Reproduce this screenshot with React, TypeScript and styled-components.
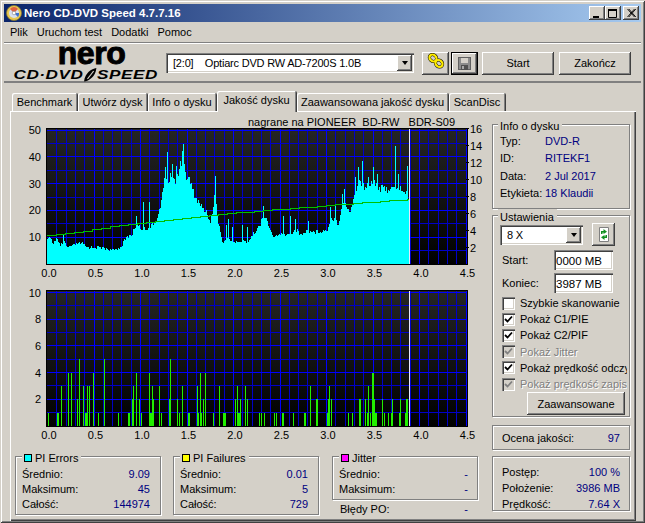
import React from 'react';
import styled, { createGlobalStyle, css } from 'styled-components';

const FACE = '#d4d0c8';
const raised = css`
  box-shadow: inset -1px -1px 0 #404040, inset 1px 1px 0 #fff, inset -2px -2px 0 #808080, inset 2px 2px 0 ${FACE};
`;
const sunken = css`
  box-shadow: inset 1px 1px 0 #808080, inset 2px 2px 0 #404040, inset -1px -1px 0 #fff, inset -2px -2px 0 ${FACE};
`;
const etched = css`
  border: 1px solid #808080;
  box-shadow: inset 1px 1px 0 #fff, 1px 1px 0 #fff;
`;

const Global = createGlobalStyle`
  html, body { margin: 0; padding: 0; background: ${FACE}; }
  body { font-family: "Liberation Sans", Arial, sans-serif; font-size: 11px; color: #000; }
  #root { width: 645px; height: 523px; overflow: hidden; }
  * { box-sizing: border-box; }
`;

const Win = styled.div`
  width: 645px;
  height: 523px;
  padding: 4px 4px 2px;
  background: ${FACE};
  display: flex;
  flex-direction: column;
  box-shadow: inset 1px 1px 0 ${FACE}, inset -1px -1px 0 #404040, inset 2px 2px 0 #fff, inset -2px -2px 0 #808080;
`;
const TitleBar = styled.div`
  height: 18px;
  flex: none;
  display: flex;
  align-items: center;
  padding: 0 2px;
  background: linear-gradient(90deg, #0a246a, #a6caf0);
`;
const TitleText = styled.span`
  color: #fff;
  font-weight: 700;
  font-size: 11.5px;
  margin-left: 2px;
  flex: 1;
`;
const CaptionBtn = styled.div<{ $gap?: number }>`
  width: 16px;
  height: 14px;
  background: ${FACE};
  margin-left: ${p => p.$gap ?? 0}px;
  display: flex;
  align-items: center;
  justify-content: center;
  ${raised}
`;
const MenuBar = styled.div`
  height: 20px;
  flex: none;
  display: flex;
  align-items: center;
  padding-left: 6px;
  gap: 9px;
`;
const MenuItem = styled.span``;
const Toolbar = styled.div`
  height: 41px;
  flex: none;
  display: flex;
  align-items: center;
  padding: 1px 0 0 10px;
  box-shadow: inset 0 1px 0 #808080, inset 0 2px 0 #fff, inset 0 -2px 0 #808080, inset 0 -1px 0 #fff;
`;
const Logo = styled.div`
  width: 152px;
  height: 37px;
  display: flex;
  flex-direction: column;
  align-items: center;
`;
const Nero = styled.div`
  font-size: 32px;
  line-height: 25px;
  height: 25px;
  margin-top: -4px;
  font-weight: 700;
  letter-spacing: -0.4px;
  -webkit-text-stroke: 1px #000;
  margin-left: 3px;
`;
const LogoSub = styled.div`
  margin: 2px 0 0 -8px;
  display: flex;
  align-items: center;
  height: 14px;
  font-size: 12.5px;
  font-weight: 700;
  font-style: italic;
  white-space: nowrap;
  letter-spacing: 0.4px;
  transform: scaleX(1.37);
`;
const Combo = styled.div<{ $w: number; $h?: number }>`
  width: ${p => p.$w}px;
  height: ${p => p.$h ?? 20}px;
  flex: none;
  background: #fff;
  display: flex;
  align-items: center;
  padding: 2px 2px 2px 7px;
  ${sunken}
`;
const ComboText = styled.span`
  flex: 1;
  white-space: pre;
  letter-spacing: -0.2px;
`;
const ComboArrow = styled.div`
  width: 15px;
  height: 16px;
  background: ${FACE};
  display: flex;
  align-items: center;
  justify-content: center;
  ${raised}
  &::after {
    content: '';
    border-style: solid;
    border-width: 4px 3.5px 0;
    border-color: #000 transparent transparent;
  }
`;
const Btn = styled.div<{ $w: number; $h?: number; $ml?: number; $def?: boolean }>`
  width: ${p => p.$w}px;
  height: ${p => p.$h ?? 23}px;
  margin-left: ${p => p.$ml ?? 0}px;
  flex: none;
  background: ${FACE};
  display: flex;
  align-items: center;
  justify-content: center;
  ${raised}
  ${p => p.$def && css`
    border: 1px solid #000;
  `}
`;
const TabStrip = styled.div`
  height: 28px;
  flex: none;
  padding: 8px 0 0 8px;
  display: flex;
  align-items: flex-end;
`;
const Tab = styled.div<{ $w: number; $on?: boolean }>`
  width: ${p => p.$w}px;
  height: ${p => (p.$on ? 21 : 18)}px;
  margin-bottom: ${p => (p.$on ? -1 : 0)}px;
  background: ${FACE};
  border-radius: 2px 2px 0 0;
  display: flex;
  align-items: center;
  justify-content: center;
  position: relative;
  z-index: ${p => (p.$on ? 2 : 0)};
  padding-bottom: ${p => (p.$on ? 3 : 0)}px;
  box-shadow: inset 1px 1px 0 #fff, inset -1px 0 0 #808080;
  border-right: 1px solid #404040;
`;
const Panel = styled.div`
  margin: 0 5px 0 6px;
  flex: 1;
  min-height: 0;
  padding: 1px 3px 0 2px;
  display: flex;
  box-shadow: inset 1px 1px 0 #fff, inset -1px -1px 0 #404040, inset -2px -2px 0 #808080;
`;
const LeftCol = styled.div`
  width: 478px;
  flex: none;
  display: flex;
  flex-direction: column;
`;
const RightCol = styled.div`
  width: 138px;
  margin-left: 2px;
  flex: none;
  padding-top: 6px;
  display: flex;
  flex-direction: column;
`;
const ChartSvg = styled.svg`
  display: block;
  flex: none;
  font-family: "Liberation Sans", Arial, sans-serif;
  font-size: 11px;
  text {
    fill: #000;
    white-space: pre;
  }
`;
const Group = styled.fieldset<{ $w?: number; $pad?: string }>`
  margin: 0;
  min-width: 0;
  width: ${p => (p.$w ? `${p.$w}px` : 'auto')};
  padding: ${p => p.$pad ?? '0'};
  ${etched}
`;
const Legend = styled.legend<{ $ml?: number }>`
  margin-left: ${p => p.$ml ?? 0}px;
  padding: 3px 3px 0 2px;
  height: 13px;
  line-height: 13px;
  background: ${FACE};
  display: flex;
  align-items: center;
  white-space: nowrap;
`;
const Swatch = styled.i<{ $c: string }>`
  width: 8px;
  height: 8px;
  background: ${p => p.$c};
  border: 1px solid #000;
  margin-right: 3px;
`;
const StatsRow = styled.div`
  margin: 6px 0 0 3px;
  display: flex;
  gap: 12px;
`;
const Stat = styled.div<{ $h?: number }>`
  flex: none;
  display: flex;
  justify-content: space-between;
  align-items: center;
  height: ${p => p.$h ?? 15}px;
`;
const Value = styled.span`
  color: #000080;
`;
const InfoRow = styled.div`
  display: grid;
  grid-template-columns: 45px 1fr;
  align-items: center;
  height: 17.5px;
`;
const JitterCol = styled.div`
  width: 146px;
  margin-left: 1px;
  display: flex;
  flex-direction: column;
`;
const ErrRow = styled(Stat)`
  padding: 2px 10px 0 8px;
`;
const SetRow = styled.div<{ $mt?: number; $ml?: number }>`
  display: flex;
  align-items: center;
  margin: ${p => p.$mt ?? 0}px 0 0 ${p => p.$ml ?? 0}px;
`;
const Input = styled.div`
  margin-left: auto;
  margin-right: 16px;
  width: 59px;
  height: 20px;
  padding: 1px 0 0 2px;
  background: #fff;
  font-size: 11.5px;
  display: flex;
  align-items: center;
  ${sunken}
`;
const CheckList = styled.div`
  margin: 2px 0 0 2px;
`;
const CheckRow = styled.div<{ $dis?: boolean }>`
  height: 16.2px;
  width: 125px;
  display: flex;
  align-items: center;
  white-space: nowrap;
  overflow: hidden;
  color: ${p => (p.$dis ? '#808080' : '#000')};
  text-shadow: ${p => (p.$dis ? '1px 1px 0 #fff' : 'none')};
`;
const Box = styled.span<{ $dis?: boolean }>`
  width: 13px;
  height: 13px;
  flex: none;
  margin-right: 5px;
  background: ${p => (p.$dis ? FACE : '#fff')};
  display: flex;
  align-items: center;
  justify-content: center;
  ${sunken}
`;
const PlainGroup = styled.div<{ $h: number; $mt: number; $top?: boolean }>`
  height: ${p => p.$h}px;
  margin-top: ${p => p.$mt}px;
  padding: ${p => (p.$top ? '7px' : '0')} 9px 0;
  display: flex;
  flex-direction: column;
  justify-content: ${p => (p.$top ? 'flex-start' : 'center')};
  ${etched}
`;

const X = (v: number) => 47.5 + 93 * v;

function Chart({ top, height, plotTop, bottom, left, right, unit, minor, major, max, labelY, caption, children }: {
  top: number; height: number; plotTop: number; bottom: number; left: number[]; right?: number[];
  unit: number; minor: number; major: number; max: number; labelY: number; caption?: string; children: React.ReactNode;
}) {
  const Y = (v: number) => bottom - unit * v;
  const vs: number[] = [];
  for (let i = 1; i <= 45; i++) vs.push(i);
  const hs: number[] = [];
  for (let v = minor; v <= max + 0.001; v += minor) hs.push(v);
  const gid = `bg${top}`;
  return (
    <ChartSvg width={478} height={height} viewBox={`12 ${top} 478 ${height}`}>
      <defs>
        <linearGradient id={gid} x1="0" y1="0" x2="0" y2="1">
          <stop offset="0" stopColor="#252525" />
          <stop offset="1" stopColor="#000" />
        </linearGradient>
      </defs>
      {caption && <text x={248} y={127}>{caption}</text>}
      <rect x={46} y={plotTop} width={422} height={bottom - plotTop + 1} fill="#000" />
      <rect x={47} y={plotTop + 1} width={419} height={bottom - plotTop} fill={`url(#${gid})`} />
      <g shapeRendering="crispEdges">
        {vs.map(i => (
          <line key={i} x1={X(i / 10)} x2={X(i / 10)} y1={plotTop + 1} y2={bottom}
            stroke={i % 5 === 0 ? '#0000ff' : '#0000c8'} strokeWidth={1} />
        ))}
        {hs.map(v => {
          const isMajor = Math.abs(v / major - Math.round(v / major)) < 0.001;
          return <line key={v} x1={47} x2={466} y1={Y(v)} y2={Y(v)} stroke={isMajor ? '#0000ff' : '#0000c8'} strokeWidth={1} />;
        })}
      </g>
      {children}
      <line x1={409.5} x2={409.5} y1={plotTop + 1} y2={bottom} stroke="#e8e8ff" strokeWidth={1} shapeRendering="crispEdges" />
      {left.map(v => <text key={v} x={41} y={Y(v) + 4} textAnchor="end">{v}</text>)}
      {right && right.map(v => (
        <React.Fragment key={v}>
          <line x1={466} x2={469} y1={265 - 8.44 * v} y2={265 - 8.44 * v} stroke="#000" shapeRendering="crispEdges" />
          <text x={470} y={265 - 8.44 * v + 4.5}>{v}</text>
        </React.Fragment>
      ))}
      {[0, 0.5, 1, 1.5, 2, 2.5, 3, 3.5, 4, 4.5].map(v => (
        <text key={v} x={X(v) + 1.5} y={labelY} textAnchor="middle">{v.toFixed(1)}</text>
      ))}
    </ChartSvg>
  );
}

const ENV: [number, number][] = [
  [47,238],[50,238],[53,243],[56,237],[60,246],[63,240],[67,247],[77,243],[82,243],[87,247],[100,247],[113,250],[120,247],
  [125,238],[132,233],[137,220],[140,228],[145,228],[152,224],[158,214],[162,192],[165,170],[168,180],[172,168],[175,180],
  [178,168],[180,165],[183,158],[185,172],[188,174],[192,186],[195,195],[200,203],[207,211],[210,223],[213,203],[215,180],
  [217,216],[220,230],[222,242],[227,237],[230,239],[233,242],[240,241],[248,241],[252,234],[257,227],[260,224],[263,212],
  [267,221],[270,229],[273,237],[277,234],[283,234],[290,234],[295,227],[300,234],[308,229],[312,231],[327,229],[330,217],
  [335,217],[338,223],[342,199],[344,197],[347,209],[350,209],[355,189],[358,177],[362,181],[365,187],[368,181],[373,177],
  [380,186],[387,186],[393,186],[398,184],[403,188],[409,195],
];
const SPIKES: [number, number][] = [
  [63,235],[143,203],[149,203],[167,153],[183,145],[182,152],[180,162],[176,167],[172,165],[165,168],[215,177],[228,220],[136,217],
  [263,207],[283,217],[290,217],[295,220],[308,222],[330,208],[335,207],[342,195],[344,190],[355,178],[358,168],[362,162],
  [368,178],[373,168],[377,175],[395,147],[398,175],[407,167],[247,228],[232,228],[242,226],[226,226],
];
const envAt = (x: number) => {
  for (let i = 1; i < ENV.length; i++) {
    if (x <= ENV[i][0]) {
      const [a, b] = ENV[i - 1];
      const [c, d] = ENV[i];
      return b + ((d - b) * (x - a)) / (c - a);
    }
  }
  return ENV[ENV.length - 1][1];
};
const rnd = (x: number) => {
  const s = Math.sin(x * 12.9898) * 43758.5453;
  return s - Math.floor(s);
};
function cyanPath() {
  const tops: Record<number, number> = {};
  for (let x = 47; x < 410; x++) {
    const t = envAt(x);
    tops[x] = Math.min(264, Math.round(t + rnd(x) * (1.5 + (265 - t) * 0.08)));
  }
  SPIKES.forEach(([x, y]) => { tops[x] = y; });
  let d = 'M47 265';
  for (let x = 47; x < 410; x++) d += `V${tops[x]}H${x + 1}`;
  return d + 'V265Z';
}
const GREEN: [number, number][] = [[47,236],[60,235],[133,224],[240,213],[327,206],[409,200]];
function greenPath() {
  const at = (x: number) => {
    for (let i = 1; i < GREEN.length; i++) {
      if (x <= GREEN[i][0]) {
        const [a, b] = GREEN[i - 1];
        const [c, d] = GREEN[i];
        return b + ((d - b) * (x - a)) / (c - a);
      }
    }
    return 200;
  };
  let d = `M47 ${at(47)}`;
  for (let x = 47; x < 409; x += 9) {
    const nx = Math.min(409, x + 9);
    d += `H${nx}V${Math.round(at(nx))}`;
  }
  return d;
}

const B1: [number, number, number?][] = [
  [145,1],[170,1],[175,1],[184,3],[205,4],[214,4],[232,2],[238,5],[250,3],[256,1,2],[262,3],[268,3],[280,4],[295,1],[313,5],[355,1],
  [385,1,2],[397,2,2],[400,3],[409,4],[418,2],[424,1],[448,4],[451,1,2],[457,3],[460,2],[478,3],[484,1],[508,2,2],[511,5],[532,2],
  [538,1],[547,3],[565,1,2],[592,3],[595,1],[601,4],[604,1],[610,2],[616,4],[640,1],[658,3],[670,1,3],[706,2],[712,3],[715,1,2],[721,2],[736,3],[742,2],
];
const B2: [number, number, number?][] = [
  [0,2],[16,3],[22,2],[58,1],[64,1],[73,1],[103,1],[109,1],[127,1,2],[160,1],[193,1,2],[211,3],[229,2,2],[262,1,2],[265,2],[268,3],[274,2],
  [325,1],[337,1],[358,2,2],[376,2],[382,1],[385,3],[391,1],[397,4,2],[403,2],[403,1,3],[427,2],[433,1],[445,1],[454,1,2],[457,2],[478,1,2],[481,2],[496,1,2],[499,2,2],
];

const DiscIcon = () => (
  <svg width="16" height="16" viewBox="0 0 16 16">
    <circle cx="8" cy="8" r="7.5" fill="#e8c850" stroke="#8a7a30" strokeWidth="0.8" />
    <circle cx="8" cy="8" r="5" fill="#d8e0f0" />
    <path d="M8 8 L4 4 A5 5 0 0 1 12 4Z" fill="#e06040" />
    <path d="M8 8 L12 12 A5 5 0 0 0 13 8Z" fill="#4070d0" />
    <circle cx="8" cy="8" r="1.8" fill="#fff" stroke="#707070" strokeWidth="0.5" />
  </svg>
);
const MinIcon = () => <svg width="10" height="9" viewBox="0 0 10 9"><rect x="1" y="7" width="6" height="2" fill="#000" /></svg>;
const MaxIcon = () => <svg width="10" height="9" viewBox="0 0 10 9"><path d="M0.5 1.5H8.5V8.5H0.5Z M0.5 0.5H8.5" fill="none" stroke="#000" /><rect width="9" height="2" fill="#000" /></svg>;
const CloseIcon = () => <svg width="9" height="8" viewBox="0 0 9 8"><path d="M0.5 0L7.5 8M1.8 0L8.8 8M7.5 0L0.5 8M8.8 0L1.8 8" stroke="#000" strokeWidth="0.9" fill="none" /></svg>;
const LinkSvg = styled.svg`
  margin-bottom: 4px;
`;
const LinkIcon = () => (
  <LinkSvg width="18" height="16" viewBox="0 0 18 16">
    <g fill="none">
      <ellipse cx="6" cy="5" rx="3.8" ry="3.2" transform="rotate(40 6 5)" stroke="#000" strokeWidth="3.2" />
      <ellipse cx="12" cy="10.5" rx="3.8" ry="3.2" transform="rotate(40 12 10.5)" stroke="#000" strokeWidth="3.2" />
      <ellipse cx="6" cy="5" rx="3.8" ry="3.2" transform="rotate(40 6 5)" stroke="#ffec00" strokeWidth="2.2" />
      <ellipse cx="12" cy="10.5" rx="3.8" ry="3.2" transform="rotate(40 12 10.5)" stroke="#ffec00" strokeWidth="2.2" />
    </g>
  </LinkSvg>
);
const SaveIcon = () => (
  <svg width="13" height="13" viewBox="0 0 13 13" shapeRendering="crispEdges">
    <rect width="13" height="13" fill="#606060" />
    <rect x="1" y="1" width="11" height="11" fill="#8c8c8c" />
    <rect x="3" y="1" width="7" height="5" fill="#d4d0c8" />
    <rect x="3" y="8" width="7" height="5" fill="#505050" />
    <rect x="4" y="9" width="2" height="3" fill="#a8a8a8" />
  </svg>
);
const RefreshIcon = () => (
  <svg width="10" height="15" viewBox="0 0 10 15">
    <path d="M0.5 0.5H9.5V14.5H0.5Z" fill="#fff" stroke="#808080" />
    <path d="M2 7V4H4.5V2L8 4.7L4.5 7V5.6H3.5V7Z" fill="#109020" />
    <path d="M8 8V11H5.5V13L2 10.3L5.5 8V9.4H6.5V8Z" fill="#109020" />
  </svg>
);
const Tick = ({ dis }: { dis?: boolean }) => (
  <svg width="9" height="9" viewBox="0 0 9 9"><path d="M1 4L3.5 6.5L8 1.5" fill="none" stroke={dis ? '#808080' : '#000'} strokeWidth="1.8" /></svg>
);
const LogoSlash = () => (
  <svg width="10" height="14" viewBox="0 0 10 14">
    <path d="M9.5 0C6 0.5 1 5 0.5 13.5C4 13 9 8.5 9.5 0Z" fill="#000" />
    <path d="M7.5 3L3 11" stroke={FACE} strokeWidth="0.8" />
  </svg>
);

const stats = [
  { name: 'PI Errors', c: '#00ffff', rows: [['Średnio:', '9.09'], ['Maksimum:', '45'], ['Całość:', '144974']] },
  { name: 'PI Failures', c: '#ffff00', rows: [['Średnio:', '0.01'], ['Maksimum:', '5'], ['Całość:', '729']] },
];
const checks: [string, boolean, boolean][] = [
  ['Szybkie skanowanie', false, false],
  ['Pokaż C1/PIE', true, false],
  ['Pokaż C2/PIF', true, false],
  ['Pokaż Jitter', true, true],
  ['Pokaż prędkość odczytu', true, false],
  ['Pokaż prędkość zapisu', true, true],
];
const tabs: [string, number, boolean?][] = [
  ['Benchmark', 66], ['Utwórz dysk', 70], ['Info o dysku', 69], ['Jakość dysku', 80, true], ['Zaawansowana jakość dysku', 152], ['ScanDisc', 57],
];

export default function App() {
  return (
    <Win>
      <Global />
      <TitleBar>
        <DiscIcon />
        <TitleText>Nero CD-DVD Speed 4.7.7.16</TitleText>
        <CaptionBtn><MinIcon /></CaptionBtn>
        <CaptionBtn><MaxIcon /></CaptionBtn>
        <CaptionBtn $gap={2}><CloseIcon /></CaptionBtn>
      </TitleBar>
      <MenuBar>
        <MenuItem>Plik</MenuItem>
        <MenuItem>Uruchom test</MenuItem>
        <MenuItem>Dodatki</MenuItem>
        <MenuItem>Pomoc</MenuItem>
      </MenuBar>
      <Toolbar>
        <Logo>
          <Nero>nero</Nero>
          <LogoSub>CD·DVD<LogoSlash />SPEED</LogoSub>
        </Logo>
        <Combo $w={248}>
          <ComboText>{'[2:0]    Optiarc DVD RW AD-7200S 1.0B'}</ComboText>
          <ComboArrow />
        </Combo>
        <Btn $w={27} $ml={8}><LinkIcon /></Btn>
        <Btn $w={27} $ml={2} $def><SaveIcon /></Btn>
        <Btn $w={72} $ml={4}>Start</Btn>
        <Btn $w={72} $ml={5}>Zakończ</Btn>
      </Toolbar>
      <TabStrip>
        {tabs.map(([t, w, on]) => <Tab key={t} $w={w} $on={on}>{t}</Tab>)}
      </TabStrip>
      <Panel>
        <LeftCol>
          <Chart top={113} height={170} plotTop={129} bottom={265} left={[10, 20, 30, 40, 50]} right={[2, 4, 6, 8, 10, 12, 14, 16]}
            unit={2.68} minor={5} major={10} max={50} labelY={278} caption={'nagrane na PIONEER  BD-RW   BDR-S09'}>
            <path d={cyanPath()} fill="#00ffff" shapeRendering="crispEdges" />
            <path d={greenPath()} fill="none" stroke="#00c000" strokeWidth="1" shapeRendering="crispEdges" />
          </Chart>
          <Chart top={283} height={162} plotTop={291} bottom={427} left={[2, 4, 6, 8, 10]}
            unit={13.35} minor={1} major={2} max={10} labelY={440}>
            <g fill="#22ee00" shapeRendering="crispEdges">
              {B1.map(([z, v, w], i) => <rect key={i} x={Math.round(z / 3)} y={427 - v * 13.35} width={w ?? 1} height={v * 13.35} />)}
              {B2.map(([z, v, w], i) => <rect key={i} x={240 + Math.round(z / 3)} y={427 - v * 13.35} width={w ?? 1} height={v * 13.35} />)}
            </g>
          </Chart>
          <StatsRow>
            {stats.map(s => (
              <Group key={s.name} $w={146} $pad="3px 10px 2px 6px">
                <Legend><Swatch $c={s.c} />{s.name}</Legend>
                {s.rows.map(([a, b]) => <Stat key={a}><span>{a}</span><Value>{b}</Value></Stat>)}
              </Group>
            ))}
            <JitterCol>
              <Group $w={146} $pad="3px 9px 3px 6px">
                <Legend><Swatch $c="#ff00ff" />Jitter</Legend>
                <Stat><span>Średnio:</span><Value>-</Value></Stat>
                <Stat><span>Maksimum:</span><Value>-</Value></Stat>
              </Group>
              <ErrRow><span>Błędy PO:</span><Value>-</Value></ErrRow>
            </JitterCol>
          </StatsRow>
        </LeftCol>
        <RightCol>
          <Group $pad="1px 6px 6px 7px">
            <Legend $ml={-2}>Info o dysku</Legend>
            <InfoRow><span>Typ:</span><Value>DVD-R</Value></InfoRow>
            <InfoRow><span>ID:</span><Value>RITEKF1</Value></InfoRow>
            <InfoRow><span>Data:</span><Value>2 Jul 2017</Value></InfoRow>
            <InfoRow><span>Etykieta:</span><Value>18 Klaudii</Value></InfoRow>
          </Group>
          <Group $pad="1px 0 1px 7px">
            <Legend $ml={-2}>Ustawienia</Legend>
            <SetRow>
              <Combo $w={83}><ComboText>8 X</ComboText><ComboArrow /></Combo>
              <Btn $w={23} $h={23} $ml={9}><RefreshIcon /></Btn>
            </SetRow>
            <SetRow $mt={4} $ml={2}><span>Start:</span><Input>0000 MB</Input></SetRow>
            <SetRow $mt={3} $ml={2}><span>Koniec:</span><Input>3987 MB</Input></SetRow>
            <CheckList>
              {checks.map(([t, on, dis]) => (
                <CheckRow key={t} $dis={dis}>
                  <Box $dis={dis}>{on && <Tick dis={dis} />}</Box>{t}
                </CheckRow>
              ))}
            </CheckList>
            <Btn $w={98} $ml={27}>Zaawansowane</Btn>
          </Group>
          <PlainGroup $h={25} $mt={8}>
            <Stat><span>Ocena jakości:</span><Value>97</Value></Stat>
          </PlainGroup>
          <PlainGroup $h={55} $mt={6} $top>
            <Stat $h={16}><span>Postęp:</span><Value>100 %</Value></Stat>
            <Stat $h={16}><span>Położenie:</span><Value>3986 MB</Value></Stat>
            <Stat $h={16}><span>Prędkość:</span><Value>7.64 X</Value></Stat>
          </PlainGroup>
        </RightCol>
      </Panel>
    </Win>
  );
}
